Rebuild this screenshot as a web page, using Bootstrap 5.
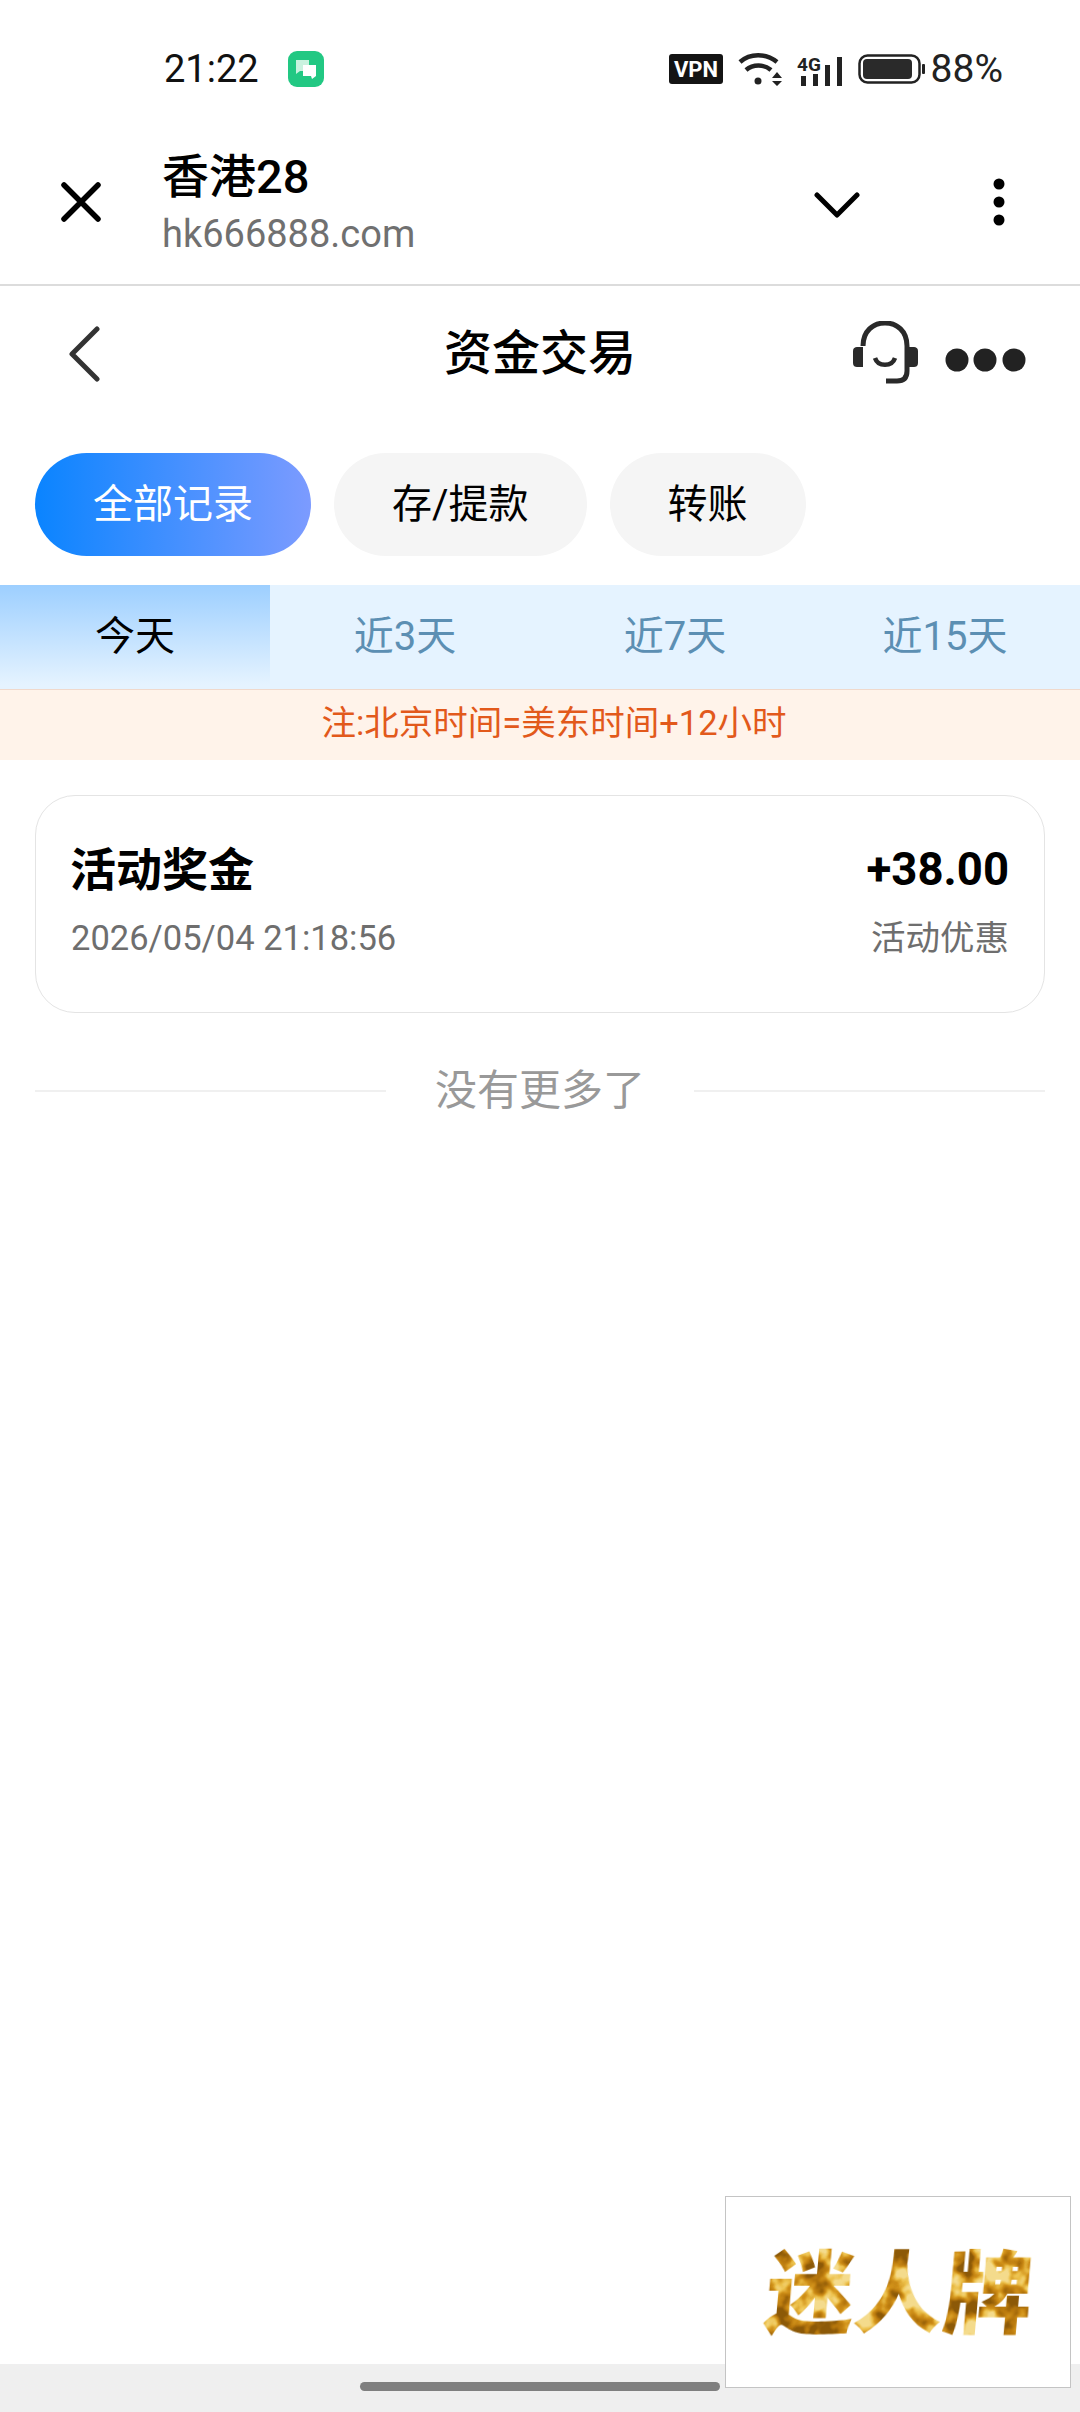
<!DOCTYPE html>
<html lang="zh-CN">
<head>
  <meta charset="UTF-8">
  <title>资金交易</title>
  <link href="https://cdn.jsdelivr.net/npm/bootstrap@5.3.2/dist/css/bootstrap.min.css" rel="stylesheet">
  <style>
    body { font-family: Roboto, "Noto Sans CJK SC", sans-serif; width: 1080px; height: 2412px; overflow: hidden; background: #fff; color: #000; }
    .page { height: 2412px; }
    /* phone status bar */
    .status-bar { height: 100px; padding: 38px 77px 0 164px; color: #111; }
    .status-time { font-size: 38px; line-height: 1; }
    .status-app { width: 36px; height: 36px; border-radius: 9px; background: #22c883; margin-left: 29px; }
    .status-pct { font-size: 39px; line-height: 1; color: #222; margin-left: 6px; }
    .status-icons { gap: 15px; }
    /* browser bar */
    .browser-bar { height: 186px; padding: 20px 75px 0 61px; border-bottom: 2px solid #dcdcdc; }
    .browser-text { margin-left: 61px; padding-top: 2px; }
    .browser-title { font-size: 47px; line-height: 58px; font-weight: 500; }
    .browser-url { margin-top: 3px; font-size: 38px; line-height: 50px; color: #707070; }
    .browser-right { gap: 133px; }
    .chevron-down { margin-top: 6px; }
    /* page header */
    .page-head { height: 136px; grid-template-columns: 1fr auto 1fr; padding: 0 54px; }
    .back-icon { margin-left: 14px; }
    .page-title { font-size: 48px; line-height: 1; font-weight: 500; }
    .head-tools { gap: 26px; }
    .dots-icon { margin-top: 12px; }
    /* type pills */
    .type-row { gap: 23px; padding: 31px 35px 0; }
    .type-pill { height: 103px; padding: 0 58px; font-size: 40px; line-height: 103px; border: 0; background: #f5f5f5; color: #000; }
    .type-pill.on { background: linear-gradient(90deg, #0a84ff, #7c9bff); color: #fff; }
    /* date tabs */
    .date-tabs { margin-top: 29px; height: 105px; background: #e5f3ff; border-bottom: 1px solid #f0d9cc; }
    .date-tab { height: 104px; font-size: 40px; line-height: 104px; text-align: center; color: #5c8fb3; }
    .date-tab.on { color: #000; background: linear-gradient(180deg, #9dcfff, #e5f3ff 96%); }
    .tz-note { height: 70px; padding-left: 28px; font-size: 34.5px; line-height: 66px; text-align: center; color: #e2591b; background: #fff3ea; }
    /* record card */
    .record-card { margin: 35px 35px 0; height: 218px; padding: 46px 35px 0; border: 1px solid #e4e4e4; border-radius: 40px; }
    .record-title { margin-left: -1px; font-size: 46px; line-height: 56px; font-weight: 700; }
    .record-amount { font-size: 45.5px; line-height: 56px; font-weight: 700; }
    .record-sub { margin-top: 18px; font-size: 34.5px; line-height: 44px; color: #6e6e6e; }
    /* end of list */
    .end-row { margin: 51px 35px 0; gap: 49px; font-size: 42px; line-height: 54px; color: #999; }
    .end-line { height: 2px; background: #f0f0f0; }
    /* home bar */
    .home-bar { height: 48px; background: #efefef; }
    .home-handle { width: 360px; height: 9px; border-radius: 5px; background: #7f7f7f; margin-top: 18px; }
    /* floating ad */
    .float-ad { right: 9px; top: 2196px; width: 346px; height: 192px; background: #fff; border: 1px solid #c4c4c4; }
    .gold-text { font-family: "Noto Sans CJK SC", sans-serif; font-size: 89px; font-weight: 900; }
  </style>
</head>
<body>
<div class="page d-flex flex-column position-relative">

  <div class="status-bar d-flex align-items-center">
    <span class="status-time">21:22</span>
    <span class="status-app d-flex align-items-center justify-content-center">
      <svg width="24" height="24" viewBox="0 0 24 24"><path d="M2 3h13v11H6l-4 3z" fill="#c9f2df"/><path d="M9 8h13v11l-4 3-1-3H9z" fill="#fff"/></svg>
    </span>
    <div class="status-icons d-flex align-items-center ms-auto">
      <svg width="54" height="30" viewBox="0 0 54 30"><rect width="54" height="30" rx="3" fill="#141414"/><text x="27" y="23" text-anchor="middle" font-family="Roboto" font-weight="700" font-size="22" fill="#fff">VPN</text></svg>
      <svg width="44" height="33" viewBox="0 0 44 33"><path d="M2 9C12 0 28 0 39 9M8 17c7-6 18-6 25 0" fill="none" stroke="#222" stroke-width="4.5"/><circle cx="20" cy="28" r="3.5" fill="#222"/><path d="M34 25h10l-5-6zM34 28h10l-5 5z" fill="#222"/></svg>
      <svg width="46" height="37" viewBox="0 -4 46 37"><text x="0" y="16" font-family="Roboto" font-weight="700" font-size="19" fill="#222">4G</text><path d="M4 21h5v10H4zM16 19h5v12h-5zM28 10h5v21h-5zM40 2h5v29h-5z" fill="#222"/></svg>
      <svg width="67" height="30" viewBox="0 0 67 30"><rect x="1.5" y="1.5" width="60" height="27" rx="8" fill="none" stroke="#222" stroke-width="2.5"/><rect x="5" y="5" width="49" height="20" rx="4" fill="#2a2a2a"/><rect x="64" y="10" width="3" height="10" rx="1" fill="#222"/></svg>
    </div>
    <span class="status-pct">88%</span>
  </div>

  <div class="browser-bar d-flex align-items-center">
    <svg width="40" height="40" viewBox="0 0 40 40"><path d="M3 3l34 34M37 3L3 37" stroke="#000" stroke-width="5.5" stroke-linecap="round"/></svg>
    <div class="browser-text">
      <div class="browser-title">香港28</div>
      <div class="browser-url">hk666888.com</div>
    </div>
    <div class="browser-right d-flex align-items-center ms-auto">
      <svg class="chevron-down" width="46" height="26" viewBox="0 0 46 26"><path d="M3 3l20 20L43 3" fill="none" stroke="#000" stroke-width="5" stroke-linecap="round" stroke-linejoin="round"/></svg>
      <svg width="12" height="48" viewBox="0 0 12 48"><circle cx="6" cy="6" r="5.5"/><circle cx="6" cy="24" r="5.5"/><circle cx="6" cy="42" r="5.5"/></svg>
    </div>
  </div>

  <div class="page-head d-grid align-items-center">
    <svg class="back-icon" width="32" height="56" viewBox="0 0 32 56"><path d="M29 3L4 28l25 25" fill="none" stroke="#333" stroke-width="5" stroke-linecap="round" stroke-linejoin="round"/></svg>
    <div class="page-title">资金交易</div>
    <div class="head-tools d-flex align-items-center justify-content-end">
      <svg width="66" height="66" viewBox="0 0 66 66"><path d="M10 25C10 10 20 2 32 2s22 8 22 23v25c0 7-4 10-10 10H33" fill="none" stroke="#2a2a2a" stroke-width="5"/><path d="M0 30c0-3 2-4 4-4h6v20H4c-2 0-4-1-4-4zM65 30c0-3-2-4-4-4h-7v20h7c2 0 4-1 4-4z" fill="#2a2a2a"/><path d="M22 37c3 9 17 9 20 0" fill="none" stroke="#2a2a2a" stroke-width="4.5"/></svg>
      <svg width="81" height="24" viewBox="0 0 81 24" class="dots-icon"><circle cx="12" cy="12" r="11.5" fill="#222"/><circle cx="40" cy="12" r="11.5" fill="#222"/><circle cx="69" cy="12" r="11.5" fill="#222"/></svg>
    </div>
  </div>

  <div class="type-row d-flex">
    <button class="type-pill on rounded-pill">全部记录</button>
    <button class="type-pill rounded-pill">存/提款</button>
    <button class="type-pill rounded-pill">转账</button>
  </div>

  <div class="date-tabs row g-0">
    <div class="col-3 date-tab on">今天</div>
    <div class="col-3 date-tab">近3天</div>
    <div class="col-3 date-tab">近7天</div>
    <div class="col-3 date-tab">近15天</div>
  </div>
  <div class="tz-note">注:北京时间=美东时间+12小时</div>

  <div class="record-card">
    <div class="d-flex justify-content-between">
      <span class="record-title">活动奖金</span>
      <span class="record-amount">+38.00</span>
    </div>
    <div class="record-sub d-flex justify-content-between">
      <span>2026/05/04 21:18:56</span>
      <span>活动优惠</span>
    </div>
  </div>

  <div class="end-row d-flex align-items-center">
    <div class="end-line flex-grow-1"></div>
    <span>没有更多了</span>
    <div class="end-line flex-grow-1"></div>
  </div>

  <div class="home-bar mt-auto d-flex justify-content-center">
    <div class="home-handle"></div>
  </div>

  <div class="float-ad position-absolute d-flex align-items-center justify-content-center">
    <svg width="330" height="150" viewBox="0 0 330 150">
      <defs>
        <filter id="goldFoil" x="0" y="0" width="100%" height="100%" color-interpolation-filters="sRGB">
          <feTurbulence type="fractalNoise" baseFrequency="0.04" numOctaves="3" seed="7" result="noise"/>
          <feColorMatrix in="noise" type="matrix" values="3 0 0 0 -1  3 0 0 0 -1  3 0 0 0 -1  0 0 0 0 1"/>
          <feComponentTransfer result="foil">
            <feFuncR type="table" tableValues="0.55 0.72 0.82 0.93 0.96"/>
            <feFuncG type="table" tableValues="0.35 0.47 0.57 0.76 0.86"/>
            <feFuncB type="table" tableValues="0.03 0.05 0.1 0.3 0.55"/>
          </feComponentTransfer>
          <feComposite in="foil" in2="SourceAlpha" operator="in"/>
        </filter>
      </defs>
      <text class="gold-text" x="173" y="109" text-anchor="middle" transform="skewX(-5)" filter="url(#goldFoil)">迷人牌</text>
    </svg>
  </div>
</div>
<script src="https://cdn.jsdelivr.net/npm/bootstrap@5.3.2/dist/js/bootstrap.bundle.min.js"></script>
</body>
</html>
